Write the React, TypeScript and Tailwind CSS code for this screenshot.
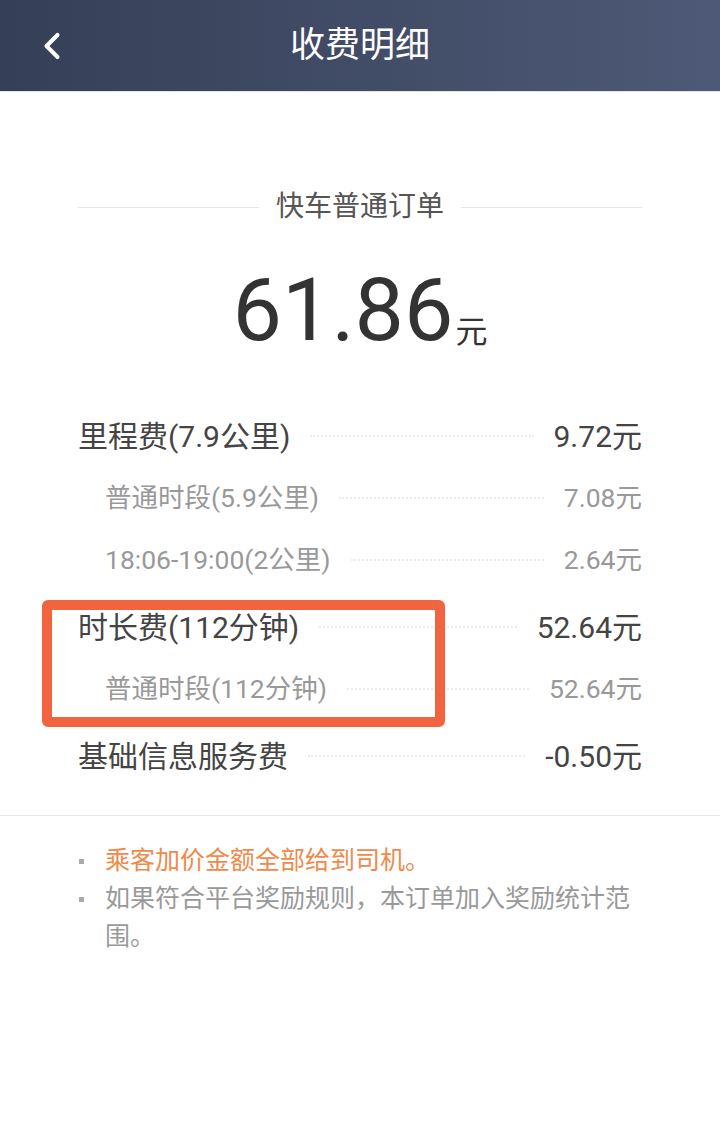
import { ChevronLeft } from 'lucide-react';

interface FeeRow {
  label: string;
  value: string;
  sub?: boolean;
}

const rows: FeeRow[] = [
  { label: '里程费(7.9公里)', value: '9.72元' },
  { label: '普通时段(5.9公里)', value: '7.08元', sub: true },
  { label: '18:06-19:00(2公里)', value: '2.64元', sub: true },
  { label: '时长费(112分钟)', value: '52.64元' },
  { label: '普通时段(112分钟)', value: '52.64元', sub: true },
  { label: '基础信息服务费', value: '-0.50元' },
];

const notes = [
  { text: '乘客加价金额全部给到司机。', color: 'text-[#ef8a4b]' },
  { text: '如果符合平台奖励规则，本订单加入奖励统计范围。', color: 'text-[#999999]' },
];

export default function App() {
  return (
    <div
      className="relative min-h-[1143px] bg-white"
      style={{ fontFamily: 'Roboto, "Noto Sans CJK SC", sans-serif' }}
    >
      <div className="h-[92px] bg-gradient-to-r from-[#353f56] to-[#4e5977] flex items-center relative border-b border-[#dfe3ec]">
        <ChevronLeft className="absolute left-[30px] w-[44px] h-[44px] text-white" strokeWidth={2.2} />
        <h1 className="w-full text-center text-white text-[35px] leading-none">收费明细</h1>
      </div>

      <div className="px-[78px] pt-[101px]">
        <div className="flex items-center gap-[17px]">
          <div className="flex-1 h-px bg-[#e6e6e6]" />
          <span className="text-[28px] text-[#555555] leading-none">快车普通订单</span>
          <div className="flex-1 h-px bg-[#e6e6e6]" />
        </div>

        <div className="flex items-end justify-center mt-[33px] h-[100px] text-[#333333]">
          <span className="text-[88px] leading-none">61.86</span>
          <span className="text-[32px] leading-none mb-[6px] ml-[2px]">元</span>
        </div>

        <div className="mt-[51px]">
          {rows.map((row, i) =>
            row.sub ? (
              <div key={i} className="h-[62px] flex items-center pl-[27px] text-[26.5px] text-[#999999]">
                <span>{row.label}</span>
                <div className="flex-1 mx-[20px] border-t-2 border-dotted border-[#ececec]" />
                <span>{row.value}</span>
              </div>
            ) : (
              <div
                key={i}
                className={`h-[62px] flex items-center text-[30px] text-[#444444] ${i === 0 ? '' : 'mt-[5px]'}`}
              >
                <span>{row.label}</span>
                <div className="flex-1 mx-[20px] border-t-2 border-dotted border-[#ececec]" />
                <span>{row.value}</span>
              </div>
            )
          )}
        </div>
      </div>

      <div className="mt-[28px] h-px bg-[#e8e8e8]" />

      <ul className="px-[78px] pt-[26px] text-[25px] leading-[38px]">
        {notes.map((n, i) => (
          <li key={i} className="flex">
            <span className="w-[27px] shrink-0 h-[38px] flex items-center">
              <span className="w-[5px] h-[5px] bg-[#aaaaaa] ml-[1px]" />
            </span>
            <span className={n.color}>{n.text}</span>
          </li>
        ))}
      </ul>

      <div className="absolute left-[42px] top-[600px] w-[403px] h-[127px] border-[10px] border-[#f2643f] rounded-[6px]" />
    </div>
  );
}
